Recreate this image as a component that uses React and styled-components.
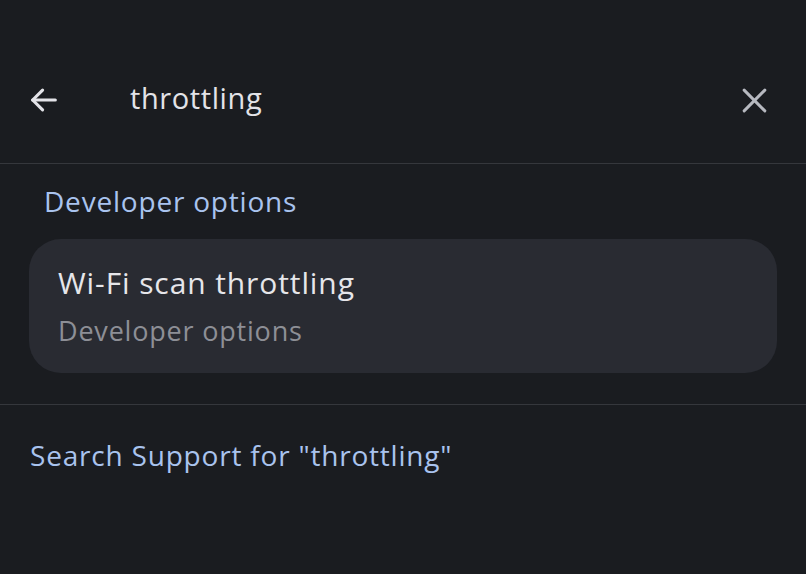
import React from 'react'
import styled, { createGlobalStyle } from 'styled-components'

const GlobalStyle = createGlobalStyle`
    html, body {
        margin: 0;
        padding: 0;
        background: #1a1c20;
    }
    body {
        font-family: "Open Sans", Roboto, sans-serif;
    }
`;

const Page = styled.div`
    width: 806px;
    height: 574px;
    background: #1a1c20;
    display: flex;
    flex-direction: column;
    overflow: hidden;
`;

const SearchBar = styled.div`
    height: 164px;
    box-sizing: border-box;
    padding: 36px 34px 0 26px;
    display: flex;
    align-items: flex-start;
    border-bottom: 1.5px solid #35373c;
`;

const IconButton = styled.button`
    width: 36px;
    height: 36px;
    margin-top: 46px;
    padding: 0;
    border: 0;
    background: transparent;
    display: flex;
    align-items: center;
    justify-content: center;
    color: ${props => props.color};
`;

const Query = styled.div`
    flex: 1;
    margin-left: 68px;
    margin-top: 44px;
    font-size: 29px;
    line-height: 36px;
    color: #e3e3e8;
    letter-spacing: 0.6px;
`;

const Section = styled.div`
    padding: 18px 29px 31px 29px;
    border-bottom: 1.5px solid #35373c;
    display: flex;
    flex-direction: column;
`;

const SectionTitle = styled.div`
    padding-left: 15px;
    font-size: 28px;
    line-height: 38px;
    color: #a9c3ee;
    margin-bottom: 19px;
    letter-spacing: 0.8px;
`;

const ResultCard = styled.div`
    background: #292b32;
    border-radius: 32px;
    height: 134px;
    box-sizing: border-box;
    padding: 24px 29px;
    display: flex;
    flex-direction: column;
`;

const ResultTitle = styled.div`
    font-size: 30px;
    line-height: 40px;
    color: #e6e6ea;
    letter-spacing: 0.9px;
`;

const ResultSub = styled.div`
    margin-top: 12px;
    font-size: 27px;
    line-height: 32px;
    color: #8d8f96;
    letter-spacing: 0.8px;
`;

const SupportLink = styled.div`
    padding: 31px 30px;
    font-size: 28px;
    line-height: 38px;
    color: #a9c3ee;
    letter-spacing: 0.8px;
`;

const ArrowIcon = () => (
    <svg width="34" height="34" viewBox="0 0 24 24" fill="none" stroke="currentColor" strokeWidth="2.2" strokeLinecap="round" strokeLinejoin="round">
        <line x1="20" y1="12" x2="4" y2="12" />
        <polyline points="11 5 4 12 11 19" />
    </svg>
)

const CloseIcon = () => (
    <svg width="31" height="31" viewBox="0 0 24 24" fill="none" stroke="currentColor" strokeWidth="2.3" strokeLinecap="round">
        <line x1="4" y1="4" x2="20" y2="20" />
        <line x1="20" y1="4" x2="4" y2="20" />
    </svg>
)

const App = () => (
    <Page>
        <GlobalStyle />
        <SearchBar>
            <IconButton color="#e3e3e8"><ArrowIcon /></IconButton>
            <Query>throttling</Query>
            <IconButton color="#b7b9c0"><CloseIcon /></IconButton>
        </SearchBar>
        <Section>
            <SectionTitle>Developer options</SectionTitle>
            <ResultCard>
                <ResultTitle>Wi-Fi scan throttling</ResultTitle>
                <ResultSub>Developer options</ResultSub>
            </ResultCard>
        </Section>
        <SupportLink>Search Support for "throttling"</SupportLink>
    </Page>
)

export default App
